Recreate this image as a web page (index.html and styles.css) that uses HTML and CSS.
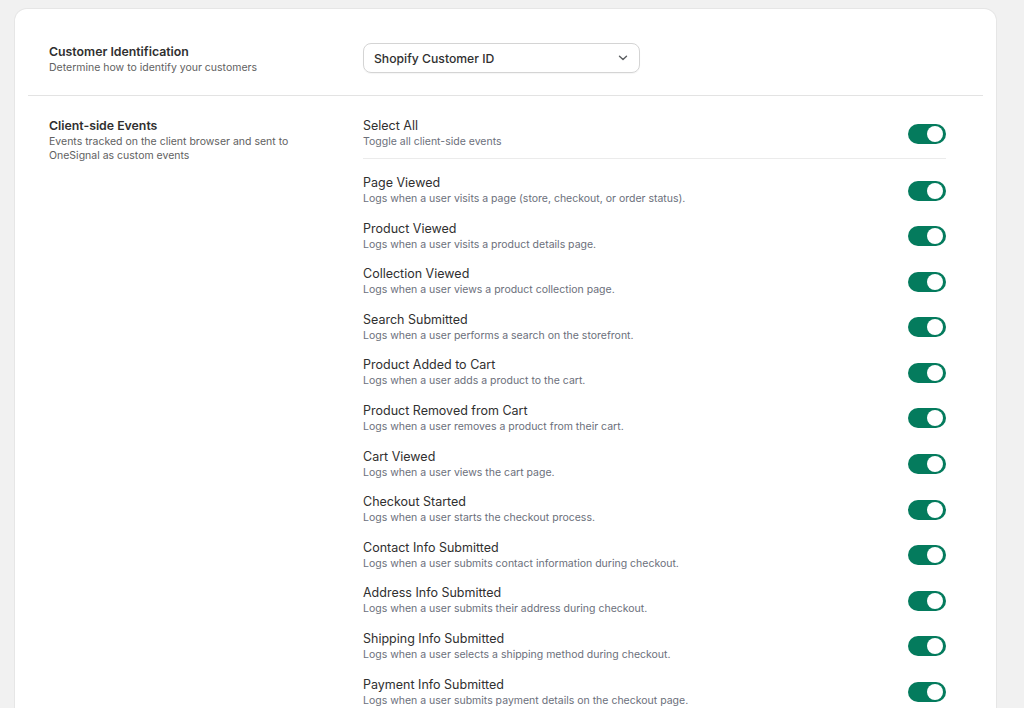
FILE: index.html
```html
<!DOCTYPE html>
<html lang="en">
<head>
    <meta charset="UTF-8">
    <meta name="viewport" content="width=device-width, initial-scale=1.0">
    <title>Event Settings</title>
    <link rel="stylesheet" href="styles.css">
</head>
<body>
    <div class="card">
        <section class="section section-top">
            <div class="label">
                <h3>Customer Identification</h3>
                <p>Determine how to identify your customers</p>
            </div>
            <div class="control">
                <div class="select">
                    <span>Shopify Customer ID</span>
                    <svg width="10" height="6" viewBox="0 0 10 6"><path d="M1.5 1.2 5 4.6l3.5-3.4" fill="none" stroke="#5c5f62" stroke-width="1.4" stroke-linecap="round" stroke-linejoin="round"/></svg>
                </div>
            </div>
        </section>

        <section class="section">
            <div class="label">
                <h3>Client-side Events</h3>
                <p>Events tracked on the client browser and sent to OneSignal as custom events</p>
            </div>
            <div class="control">
                <div class="row row-all">
                    <div class="row-text">
                        <div class="row-title">Select All</div>
                        <div class="row-desc">Toggle all client-side events</div>
                    </div>
                    <span class="toggle"></span>
                </div>
                <div class="events">
                    <div class="row">
                        <div class="row-text">
                            <div class="row-title">Page Viewed</div>
                            <div class="row-desc">Logs when a user visits a page (store, checkout, or order status).</div>
                        </div>
                        <span class="toggle"></span>
                    </div>
                    <div class="row">
                        <div class="row-text">
                            <div class="row-title">Product Viewed</div>
                            <div class="row-desc">Logs when a user visits a product details page.</div>
                        </div>
                        <span class="toggle"></span>
                    </div>
                    <div class="row">
                        <div class="row-text">
                            <div class="row-title">Collection Viewed</div>
                            <div class="row-desc">Logs when a user views a product collection page.</div>
                        </div>
                        <span class="toggle"></span>
                    </div>
                    <div class="row">
                        <div class="row-text">
                            <div class="row-title">Search Submitted</div>
                            <div class="row-desc">Logs when a user performs a search on the storefront.</div>
                        </div>
                        <span class="toggle"></span>
                    </div>
                    <div class="row">
                        <div class="row-text">
                            <div class="row-title">Product Added to Cart</div>
                            <div class="row-desc">Logs when a user adds a product to the cart.</div>
                        </div>
                        <span class="toggle"></span>
                    </div>
                    <div class="row">
                        <div class="row-text">
                            <div class="row-title">Product Removed from Cart</div>
                            <div class="row-desc">Logs when a user removes a product from their cart.</div>
                        </div>
                        <span class="toggle"></span>
                    </div>
                    <div class="row">
                        <div class="row-text">
                            <div class="row-title">Cart Viewed</div>
                            <div class="row-desc">Logs when a user views the cart page.</div>
                        </div>
                        <span class="toggle"></span>
                    </div>
                    <div class="row">
                        <div class="row-text">
                            <div class="row-title">Checkout Started</div>
                            <div class="row-desc">Logs when a user starts the checkout process.</div>
                        </div>
                        <span class="toggle"></span>
                    </div>
                    <div class="row">
                        <div class="row-text">
                            <div class="row-title">Contact Info Submitted</div>
                            <div class="row-desc">Logs when a user submits contact information during checkout.</div>
                        </div>
                        <span class="toggle"></span>
                    </div>
                    <div class="row">
                        <div class="row-text">
                            <div class="row-title">Address Info Submitted</div>
                            <div class="row-desc">Logs when a user submits their address during checkout.</div>
                        </div>
                        <span class="toggle"></span>
                    </div>
                    <div class="row">
                        <div class="row-text">
                            <div class="row-title">Shipping Info Submitted</div>
                            <div class="row-desc">Logs when a user selects a shipping method during checkout.</div>
                        </div>
                        <span class="toggle"></span>
                    </div>
                    <div class="row">
                        <div class="row-text">
                            <div class="row-title">Payment Info Submitted</div>
                            <div class="row-desc">Logs when a user submits payment details on the checkout page.</div>
                        </div>
                        <span class="toggle"></span>
                    </div>
                </div>
            </div>
        </section>
    </div>
</body>
</html>
```

FILE: styles.css
```css
body {
    margin: 0;
    padding: 9px 28px 0 15px;
    background-color: #f1f1f1;
    font-family: Inter, "Noto Sans", sans-serif;
    color: #303030;
}
.card {
    background-color: #ffffff;
    border-radius: 12px;
    box-shadow: 0 0 0 1px #e6e6e6;
    padding: 0 13px 40px;
}
.section {
    display: grid;
    grid-template-columns: 314px 583px;
    padding: 21px 21px 0;
}
.section-top {
    padding: 34px 21px 20px;
    border-bottom: 1px solid #e3e3e3;
}
.label h3 {
    margin: 0;
    font-size: 12.3px;
    line-height: 18px;
    font-weight: 600;
    color: #303030;
}
.label p {
    margin: 0;
    max-width: 280px;
    font-size: 10.5px;
    line-height: 14px;
    color: #616161;
}
.select {
    display: flex;
    align-items: center;
    justify-content: space-between;
    width: 277px;
    height: 30px;
    box-sizing: border-box;
    padding: 0 11px 0 10px;
    border: 1px solid #d4d4d4;
    border-radius: 8px;
    box-shadow: 0 1px 1px rgba(0, 0, 0, 0.04);
    font-size: 12.2px;
    font-weight: 500;
    color: #303030;
}
.row {
    display: flex;
    align-items: center;
    justify-content: space-between;
}
.row-all {
    padding-bottom: 9px;
    border-bottom: 1px solid #ebebeb;
}
.events {
    display: flex;
    flex-direction: column;
    gap: 13.6px;
    padding-top: 15px;
}
.row-title {
    font-size: 12.5px;
    line-height: 18px;
    font-weight: 400;
    color: #303030;
}
.row-desc {
    font-size: 10.5px;
    line-height: 14px;
    color: #6b6f7b;
}
.toggle {
    position: relative;
    width: 38px;
    height: 20px;
    margin-top: 1px;
    border-radius: 10px;
    background-color: #047b5d;
}
.toggle::after {
    content: "";
    position: absolute;
    right: 3px;
    top: 2px;
    width: 16px;
    height: 16px;
    border-radius: 50%;
    background-color: #ffffff;
}
```
